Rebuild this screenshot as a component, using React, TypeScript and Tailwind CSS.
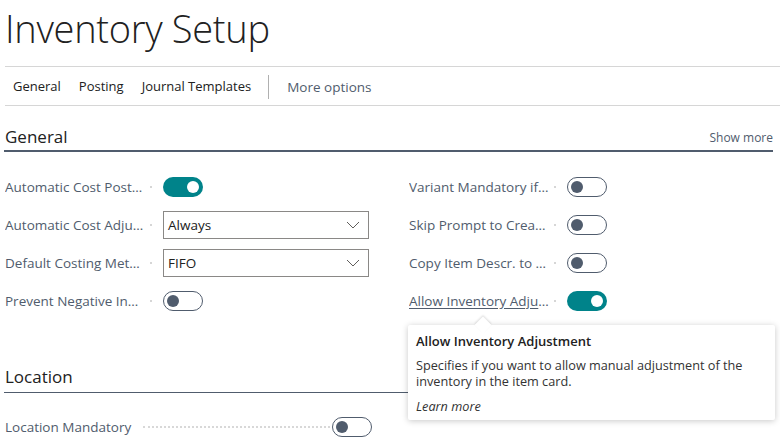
import React from "react";

const FONT = { fontFamily: '"Open Sans", "Noto Sans", sans-serif' };

function Toggle({ on }: { on?: boolean }) {
  return on ? (
    <div className="w-[40px] h-[20px] rounded-full bg-[#00838a] flex items-center justify-end pr-[4px]">
      <div className="w-[12px] h-[12px] rounded-full bg-white" />
    </div>
  ) : (
    <div className="w-[40px] h-[20px] rounded-full border border-[#505c6d] flex items-center pl-[3px] bg-white">
      <div className="w-[12px] h-[12px] rounded-full bg-[#505c6d]" />
    </div>
  );
}

function Select({ value }: { value: string }) {
  return (
    <div className="w-[206px] h-[28px] border border-[#8a8886] flex items-center justify-between pl-[4px] pr-[8px] text-[13.5px] text-[#212121]">
      <span>{value}</span>
      <svg width="14" height="8" viewBox="0 0 14 8" fill="none">
        <path d="M1 1l6 6 6-6" stroke="#605e5c" strokeWidth="1" />
      </svg>
    </div>
  );
}

function Field({
  label,
  children,
  underline,
}: {
  label: string;
  children: React.ReactNode;
  underline?: boolean;
}) {
  return (
    <div className="h-[38px] flex items-center">
      <div className="w-[158px] flex items-center shrink-0">
        <span
          className={
            "w-[140px] truncate text-[13.5px] text-[#505c6d] " +
            (underline ? "underline underline-offset-2" : "")
          }
        >
          {label}
        </span>
        <span className="w-[2px] h-[2px] rounded-full bg-[#c8c8c8] ml-[5px]" />
      </div>
      {children}
    </div>
  );
}

export default function App() {
  return (
    <div className="w-[780px] h-[440px] overflow-hidden bg-white relative" style={FONT}>
      <div className="pl-[5px]">
        <div className="h-[67px] border-b border-[#d6d6d6] flex items-start">
          <h1 className="text-[38px] font-light text-[#212121] leading-none mt-[9px] tracking-[-0.3px]">
            Inventory Setup
          </h1>
        </div>
        <div className="h-[39px] border-b border-[#d6d6d6] flex items-center text-[13px] text-[#212121] pt-[2px]">
          <span className="ml-[8px]">General</span>
          <span className="ml-[18px]">Posting</span>
          <span className="ml-[18px]">Journal Templates</span>
          <span className="ml-[17px] w-px h-[24px] bg-[#b0b0b0]" />
          <span className="ml-[18px] text-[#505c6d] text-[13.5px]">More options</span>
        </div>
      </div>

      <div className="pl-[4px] pr-[7px] mt-[18px]">
        <div className="h-[28px] border-b-2 border-[#505c6d] flex items-end justify-between pb-[1px]">
          <span className="text-[17px] font-medium text-[#212121] pl-[1px]">General</span>
          <span className="text-[12px] text-[#505c6d] mb-[2px]">Show more</span>
        </div>
      </div>

      <div className="pl-[5px] mt-[16px] flex">
        <div className="w-[404px]">
          <Field label="Automatic Cost Posting">
            <Toggle on />
          </Field>
          <Field label="Automatic Cost Adjustment">
            <Select value="Always" />
          </Field>
          <Field label="Default Costing Method">
            <Select value="FIFO" />
          </Field>
          <Field label="Prevent Negative Inventory">
            <Toggle />
          </Field>
        </div>
        <div>
          <Field label="Variant Mandatory if Exists">
            <Toggle />
          </Field>
          <Field label="Skip Prompt to Create Item">
            <Toggle />
          </Field>
          <Field label="Copy Item Descr. to Entries">
            <Toggle />
          </Field>
          <Field label="Allow Inventory Adjustment" underline>
            <Toggle on />
          </Field>
        </div>
      </div>

      <div className="pl-[4px] pr-[7px] mt-[46px]">
        <div className="h-[27px] border-b border-[#505c6d] flex items-end pb-[3px]">
          <span className="text-[17px] font-medium text-[#212121] pl-[1px]">Location</span>
        </div>
      </div>

      <div className="pl-[5px] mt-[15px] h-[38px] flex items-center">
        <div className="w-[327px] flex items-center">
          <span className="text-[13.5px] text-[#505c6d] whitespace-nowrap">Location Mandatory</span>
          <span className="ml-[12px] mr-[2px] flex-1 border-b-2 border-dotted border-[#d8d8d8] h-0" />
        </div>
        <Toggle />
      </div>

      {/* Tooltip */}
      <div className="absolute left-[408px] top-[325px] w-[367px] h-[95px] bg-white rounded-[2px] shadow-[0_1px_6px_rgba(0,0,0,0.22)] px-[8px] pt-[7px] text-[#212121]">
        <div className="absolute -top-[6px] left-[69px] w-[12px] h-[12px] bg-white rotate-45 shadow-[-1px_-1px_2px_rgba(0,0,0,0.12)]" />
        <div className="relative text-[13px] font-semibold leading-[18px]">Allow Inventory Adjustment</div>
        <div className="relative text-[12.7px] leading-[16px] mt-[7px] text-[#333]">
          Specifies if you want to allow manual adjustment of the inventory in the item card.
        </div>
        <div className="relative text-[12.7px] italic leading-[16px] mt-[9px] text-[#333]">Learn more</div>
      </div>
    </div>
  );
}
